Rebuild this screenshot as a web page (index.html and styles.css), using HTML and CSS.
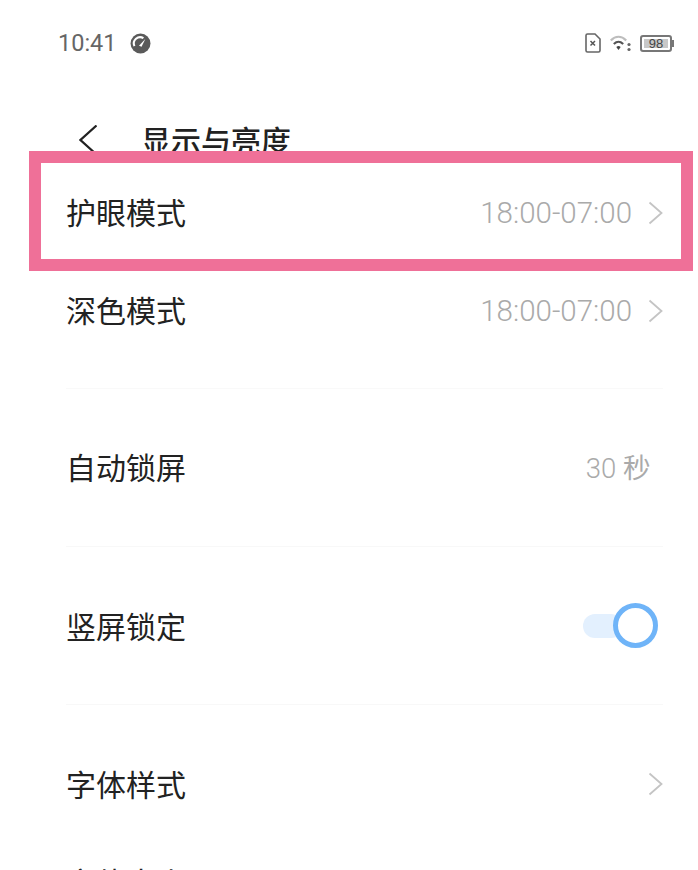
FILE: index.html
```html
<!DOCTYPE html>
<html lang="zh-CN">
<head>
<meta charset="utf-8">
<title>显示与亮度</title>
<link rel="stylesheet" href="styles.css">
</head>
<body>
<div class="screen">
  <header class="status">
    <div class="status-left">
      <span class="time">10:41</span>
      <svg class="gauge" viewBox="0 0 20 20"><circle cx="10" cy="10" r="9.5" fill="#5a5a5a"/><path d="M4.200 12.500a6 6 0 0 1 8.600-7.600" fill="none" stroke="#fff" stroke-width="2"/><path d="M8.600 12.200 14.600 5.600 11 13.200z" fill="#fff"/></svg>
    </div>
    <div class="status-right">
      <svg class="sim" viewBox="0 0 16 20"><path d="M1 2.500A1.500 1.500 0 0 1 2.500 1H10l5 5v11.500a1.500 1.500 0 0 1-1.500 1.500h-11A1.500 1.500 0 0 1 1 17.500z" fill="none" stroke="#666" stroke-width="1.600"/><path d="M5.500 8 10 12.500M10 8l-4.500 4.500" stroke="#555" stroke-width="1.500"/></svg>
      <svg class="wifi" viewBox="0 0 21 18"><path d="M.8 6.500C5.500 1.500 11.500 1.500 16.200 6.500" fill="none" stroke="#bdbdbd" stroke-width="2.200"/><path d="M3.800 10c3.500-3 5.900-3 9.400 0" fill="none" stroke="#555" stroke-width="2.200"/><path d="M6.300 13c1.500-1.300 2.900-1.300 4.400 0L8.500 16z" fill="#444"/><circle cx="19" cy="10.500" r="1.600" fill="#666"/><circle cx="19" cy="15.500" r="1.600" fill="#666"/></svg>
      <div class="battery"><span class="battery-body">98</span><span class="battery-cap"></span></div>
    </div>
  </header>

  <nav class="nav">
    <svg class="back" viewBox="0 0 18 30"><path d="M17.500 .5 1.500 15l16 14.500" fill="none" stroke="#222" stroke-width="2.200"/></svg>
    <h1 class="title">显示与亮度</h1>
  </nav>

  <div class="highlight"></div>

  <section class="group-first">
    <div class="row-short"><span class="label label-raised">护眼模式</span><span class="value">18:00-07:00</span><svg class="chevron" viewBox="0 0 15 24"><path d="M1.500 1.500 13.500 12 1.500 22.500" fill="none" stroke="#c4c4c4" stroke-width="1.800"/></svg></div>
    <div class="row-short"><span class="label label-raised">深色模式</span><span class="value">18:00-07:00</span><svg class="chevron" viewBox="0 0 15 24"><path d="M1.500 1.500 13.500 12 1.500 22.500" fill="none" stroke="#c4c4c4" stroke-width="1.800"/></svg></div>
  </section>

  <section class="group">
    <div class="row"><span class="label">自动锁屏</span><span class="value value-plain">30 秒</span></div>
    <div class="row"><span class="label label-lowered">竖屏锁定</span><div class="toggle"><span class="knob"></span></div></div>
    <div class="row row-last"><span class="label">字体样式</span><svg class="chevron" viewBox="0 0 15 24"><path d="M1.500 1.500 13.500 12 1.500 22.500" fill="none" stroke="#c4c4c4" stroke-width="1.800"/></svg></div>
    <div class="row-tail"><span class="label">字体大小</span></div>
  </section>
</div>
</body>
</html>
```
FILE: styles.css
```css
* { box-sizing: border-box; }
html, body { margin: 0; padding: 0; background: #fff; }
body { font-family: "Noto Sans CJK SC", "Liberation Sans", sans-serif; }

.screen {
  position: relative;
  width: 698px;
  height: 870px;
  overflow: hidden;
  background: #fff;
}

.status {
  height: 86px;
  padding: 33px 24px 0 58px;
  display: flex;
  justify-content: space-between;
  align-items: flex-start;
}
.status-left { display: flex; align-items: center; gap: 13px; height: 20px; }
.time { font: 400 23.500px/20px Roboto, "Liberation Sans", sans-serif; color: #666; }
.gauge { width: 21px; height: 21px; display: block; }
.status-right { display: flex; align-items: center; height: 20px; }
.sim { width: 16px; height: 20px; display: block; margin-right: 9px; }
.wifi { width: 21px; height: 18px; display: block; margin-right: 9px; }
.battery { display: flex; align-items: center; }
.battery-body {
  width: 32px;
  height: 17px;
  border: 2px solid #777;
  border-radius: 3px;
  background: #c8c8c8;
  box-shadow: inset 0 0 0 2px #fff;
  color: #444;
  font: 400 13px/13px "Liberation Sans", sans-serif;
  text-align: center;
}
.battery-cap { width: 2px; height: 7px; background: #777; }

.nav {
  height: 78px;
  padding-left: 79px;
  display: flex;
  align-items: flex-start;
}
.back { width: 18px; height: 30px; margin-top: 39px; display: block; flex: none; }
.title {
  margin: 0 0 0 44px;
  padding-top: 32px;
  font-size: 30px;
  line-height: 42px;
  font-weight: 500;
  color: #222;
}

.highlight {
  position: absolute;
  left: 29px;
  top: 151px;
  width: 664px;
  height: 120px;
  border: 12px solid #ef7098;
  background: #fff;
  z-index: 1;
}

.group-first {
  position: relative;
  z-index: 2;
  margin: 0 35px 0 66px;
  padding-bottom: 28px;
  border-bottom: 1px solid #f9f9f9;
}
.group { margin: 0 35px 0 66px; }

.row-short, .row, .row-tail { display: flex; align-items: center; }
.row-short { height: 98px; }
.row { height: 158px; border-bottom: 1px solid #f8f8f8; }
.row-last { border-bottom: 0; }
.row-tail { height: 38px; }

.label { font-size: 30px; line-height: 40px; padding-bottom: 3px; color: #222; }
.label-raised { padding-bottom: 5px; }
.label-lowered { padding-bottom: 1px; }

.value {
  margin-left: auto;
  font: 300 29.500px/40px Roboto, "Liberation Sans", sans-serif;
  color: #aaa;
}
.value-plain { margin-right: 13px; font-size: 27.500px; padding-top: 3px; }
.chevron { width: 15px; height: 24px; display: block; flex: none; margin-left: 16px; }
.label + .chevron { margin-left: auto; }

.toggle {
  position: relative;
  margin-left: auto;
  margin-right: 40px;
  width: 40px;
  height: 24px;
  border-radius: 12px;
  background: #e3f0fe;
}
.knob {
  position: absolute;
  left: 30px;
  top: -11px;
  width: 45px;
  height: 45px;
  border: 5px solid #6fb4f8;
  border-radius: 50%;
  background: #fff;
}
```
